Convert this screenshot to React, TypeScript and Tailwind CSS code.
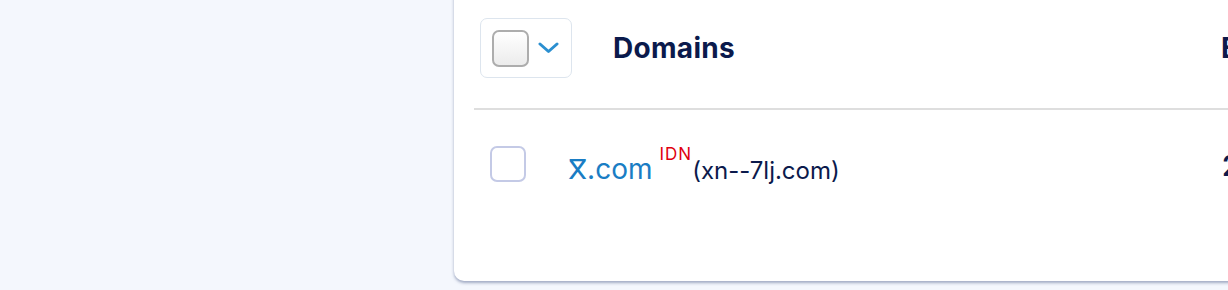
import React from "react";

function Chevron() {
  return (
    <svg width="21" height="12" viewBox="0 0 21 12" fill="none">
      <path d="M2 2 L10.5 9.5 L19 2" stroke="#2b8fd0" strokeWidth="3" strokeLinecap="round" strokeLinejoin="round" />
    </svg>
  );
}

export default function App() {
  return (
    <div className="w-[1228px] h-[290px] overflow-hidden bg-[#f4f7fd] flex font-[Inter,'DejaVu_Sans',sans-serif]">
      <div className="w-[454px] shrink-0" />
      <div className="w-[900px] shrink-0 mt-[-12px] h-[293px] bg-white rounded-bl-[10px] shadow-[0_2px_3px_rgba(80,95,140,0.5)] pl-[20px]">
        <div className="flex items-center pt-[30px] pb-[30px] border-b-2 border-[#dedede]">
          <div className="ml-[6px] w-[92px] h-[60px] rounded-[7px] border border-[#dde5ee] flex items-center pl-[11px] gap-[9px] shrink-0">
            <div className="w-[37px] h-[37px] rounded-[7px] border-2 border-[#adadad] bg-gradient-to-b from-white to-[#ececec]" />
            <Chevron />
          </div>
          <div className="ml-[41px] w-[608px] shrink-0 text-[28px] leading-none font-bold tracking-[0.3px] text-[#0b1a4c]">Domains</div>
          <div className="text-[28px] leading-none font-bold text-[#0b1a4c] whitespace-nowrap">Expiry date</div>
        </div>
        <div className="flex items-start pt-[36px]">
          <div className="ml-[16px] w-[36px] h-[36px] rounded-[7px] border-2 border-[#c4cae6] bg-white shrink-0" />
          <div className="ml-[42px] w-[654px] shrink-0 mt-[5px] whitespace-nowrap leading-[36px]">
            <a className="text-[28px] text-[#1a7dc4]">
              <span className="font-['DejaVu_Sans']">ⴳ</span>.com
            </a>
            <sup className="ml-[7px] text-[17px] tracking-[1px] text-[#e0000f] align-[11px]">IDN</sup>
            <span className="text-[24px] text-[#0b1a4c]">(xn--7lj.com)</span>
          </div>
          <div className="mt-[6px] text-[28px] leading-none font-semibold text-[#0b1a4c] whitespace-nowrap">2025-01-01</div>
        </div>
      </div>
    </div>
  );
}
